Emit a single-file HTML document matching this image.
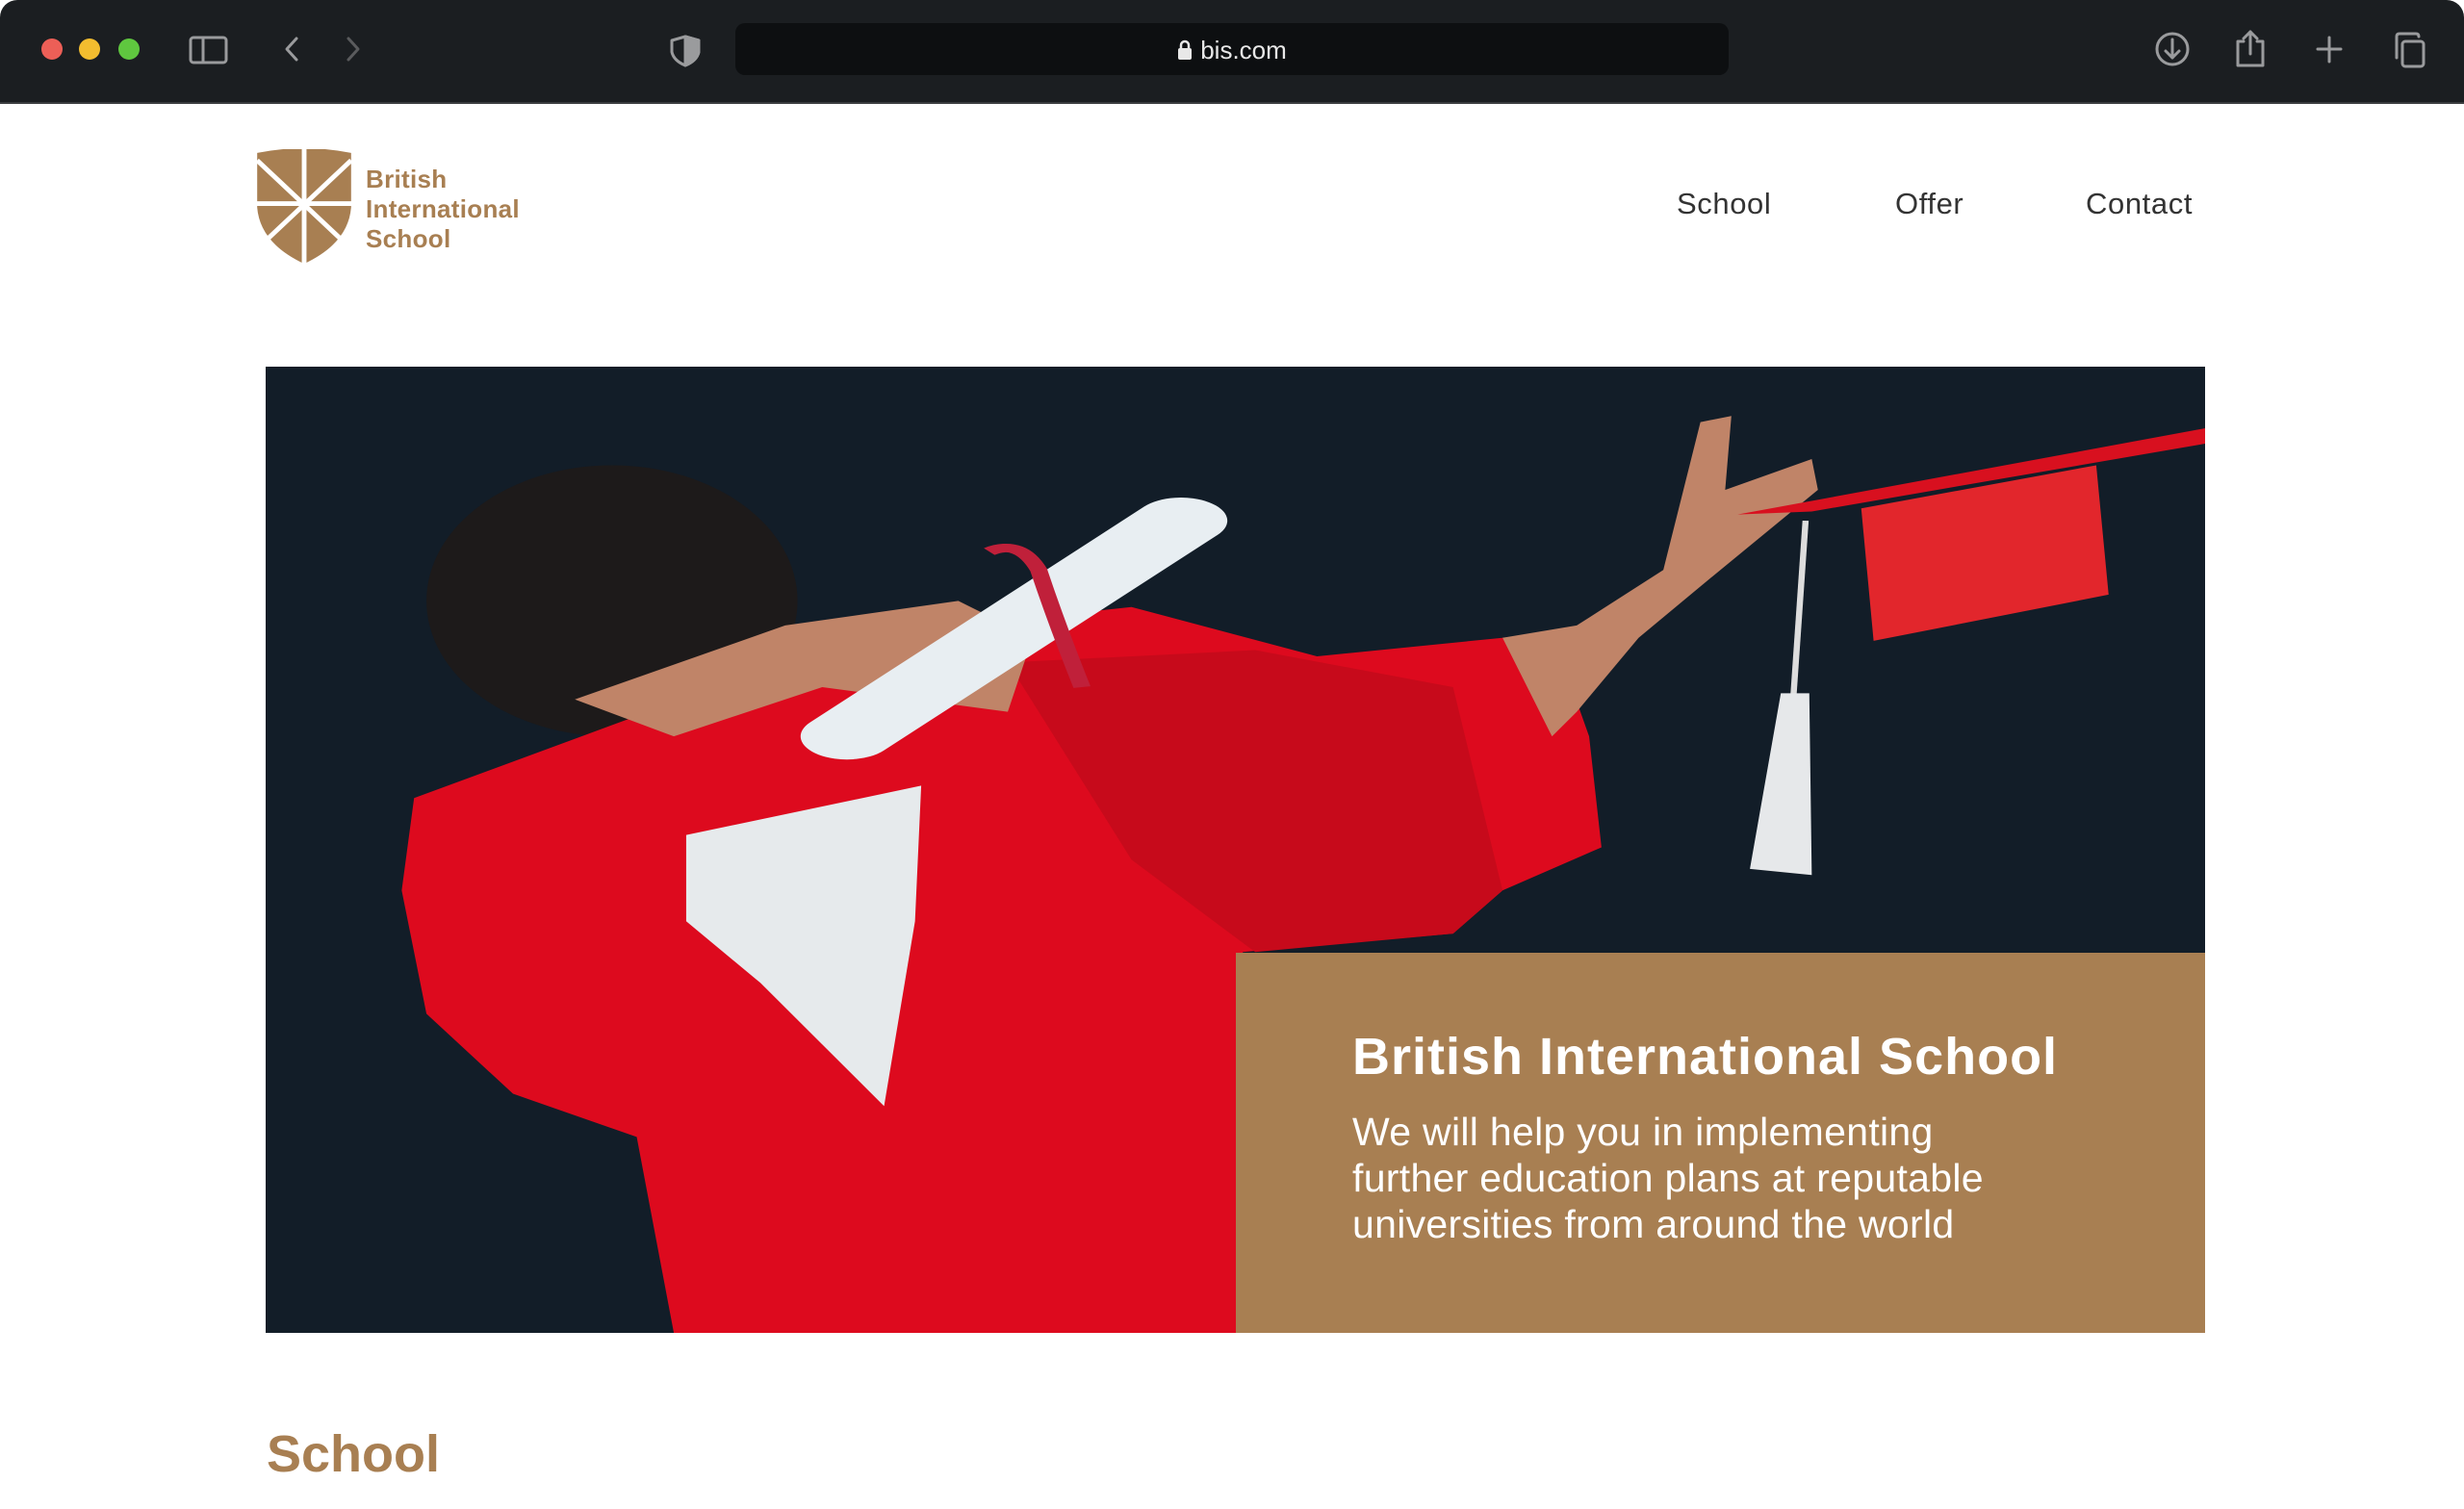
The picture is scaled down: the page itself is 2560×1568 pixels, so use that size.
<!DOCTYPE html>
<html><head><meta charset="utf-8"><style>
*{margin:0;padding:0;box-sizing:border-box}
body{width:2560px;height:1568px;background:#fff;position:relative;overflow:hidden;font-family:"Liberation Sans",sans-serif}
.bar{position:absolute;left:0;top:0;width:2560px;height:108px;background:#1b1e21;border-radius:18px 18px 0 0;border-bottom:2px solid #3a3c3f}
.dot{position:absolute;top:40px;width:22px;height:22px;border-radius:50%}
.url{position:absolute;left:764px;top:24px;width:1032px;height:54px;background:#0d0f11;border-radius:10px}
.url span{position:absolute;left:0;right:0;top:13px;text-align:center;color:#e8e8e8;font-size:26px}
.nav{position:absolute;top:194px;font-size:31px;color:#333;letter-spacing:0.6px}
.abs{position:absolute}
</style></head><body>
<div class="bar">
<div class="dot" style="left:43px;background:#ec5f57"></div>
<div class="dot" style="left:82px;background:#f3bd2f"></div>
<div class="dot" style="left:123px;background:#5fc73f"></div>
<svg class="abs" style="left:0;top:0" width="2560" height="108" fill="none" stroke="#9a9b9d" stroke-width="3" stroke-linecap="round" stroke-linejoin="round">
<rect x="198" y="39" width="37" height="26" rx="3"/><line x1="211" y1="39" x2="211" y2="65"/>
<polyline points="308,40 298,51 308,62"/>
<polyline points="362,40 372,51 362,62" stroke="#5a5b5d"/>
<path d="M712 38 L726 42 L726 54 Q724 63 712 68 Q700 63 698 54 L698 42 Z"/><path d="M712 38 L712 68 Q724 63 726 54 L726 42 Z" fill="#9a9b9d"/>
<path d="M1778 45 A10 10 0 1 1 1767 42 L1772 40" stroke="#ddd" stroke-width="2.5"/><polyline points="1768,36 1773,40 1769,45" stroke="#ddd" stroke-width="2.5"/>
<circle cx="2257" cy="51" r="16"/><line x1="2257" y1="41" x2="2257" y2="60"/><polyline points="2250,53 2257,60 2264,53"/>
<path d="M2331 43 L2325 43 L2325 68 L2351 68 L2351 43 L2345 43"/><line x1="2338" y1="33" x2="2338" y2="56"/><polyline points="2331,40 2338,33 2345,40"/>
<line x1="2420" y1="39" x2="2420" y2="64"/><line x1="2408" y1="51" x2="2432" y2="51"/>
<rect x="2496" y="43" width="22" height="26" rx="3"/><path d="M2490 60 L2490 38 Q2490 35 2493 35 L2510 35 Q2513 35 2513 38"/>
</svg>
<div class="url"><span><svg width="16" height="22" style="vertical-align:-2px;margin-right:8px"><rect x="1" y="9" width="14" height="12" rx="2" fill="#e8e8e8"/><path d="M4 10 V6 A4 4 0 0 1 12 6 V10" stroke="#e8e8e8" stroke-width="2.5" fill="none"/></svg>bis.com</span></div>
</div>

<svg class="abs" style="left:264px;top:155px" width="104" height="122" viewBox="0 0 106 125">
<path d="M3 4 Q53 -6 103 4 L103 62 Q100 100 53 122 Q6 100 3 62 Z" fill="#a87f52"/>
<g stroke="#fff" stroke-width="5"><line x1="53" y1="0" x2="53" y2="125"/><line x1="0" y1="58" x2="106" y2="58"/><line x1="3" y1="12" x2="103" y2="106"/><line x1="103" y1="12" x2="3" y2="106"/></g>
</svg>
<div class="abs" style="left:380px;top:171px;font-family:'Liberation Sans',sans-serif;font-weight:bold;font-size:26px;line-height:31px;color:#a87f52;letter-spacing:0.3px">British<br>International<br>School</div>

<div class="nav" style="left:1742px">School</div>
<div class="nav" style="left:1969px">Offer</div>
<div class="nav" style="left:2167px">Contact</div>

<svg class="abs" style="left:276px;top:381px" width="2015" height="1004" viewBox="0 0 1568 1568" preserveAspectRatio="none">
<rect width="1568" height="1568" fill="#121d28"/>
<ellipse cx="280" cy="380" rx="150" ry="220" fill="#1d1a1a"/>
<polygon points="120,700 350,530 560,420 700,390 850,470 1000,440 1040,430 1070,600 1080,780 1000,850 960,920 790,950 790,1568 330,1568 300,1250 200,1180 130,1050 110,850" fill="#dd0a1e"/>
<polygon points="600,480 800,460 960,520 1000,850 960,920 800,950 700,800" fill="#c70a1b"/>
<polygon points="340,760 530,680 525,900 500,1200 400,1000 340,900" fill="#e6eaec"/>
<polygon points="250,540 420,420 560,380 620,440 600,560 450,520 330,600" fill="#c08468"/>
<line x1="470" y1="600" x2="740" y2="250" stroke="#e8eef2" stroke-width="75" stroke-linecap="round"/>
<path d="M585 300 Q610 280 625 330 Q640 420 660 520" stroke="#c0203a" stroke-width="14" fill="none"/>
<polygon points="1000,440 1060,420 1130,330 1160,90 1185,80 1180,200 1250,150 1255,200 1170,340 1110,440 1060,560 1040,600" fill="#c08468"/>
<polygon points="1190,240 1568,100 1568,125 1250,235" fill="#d8101f"/>
<polygon points="1290,230 1480,160 1490,370 1300,445" fill="#e2262c"/>
<line x1="1245" y1="250" x2="1235" y2="540" stroke="#ddd" stroke-width="5"/>
<polygon points="1225,530 1248,530 1250,825 1200,815" fill="#e6e8ea"/>
</svg>

<div class="abs" style="left:1284px;top:990px;width:1007px;height:395px;background:#a87f52"></div>
<div class="abs" style="left:1405px;top:1067px;font-size:54px;font-weight:bold;color:#fff;white-space:nowrap;letter-spacing:1px">British International School</div>
<div class="abs" style="left:1405px;top:1152px;font-size:41px;line-height:48px;color:#fff;white-space:nowrap;letter-spacing:0.3px">We will help you in implementing<br>further education plans at reputable<br>universities from around the world</div>

<div class="abs" style="left:277px;top:1480px;font-size:54px;font-weight:bold;color:#a87f52">School</div>
</body></html>
